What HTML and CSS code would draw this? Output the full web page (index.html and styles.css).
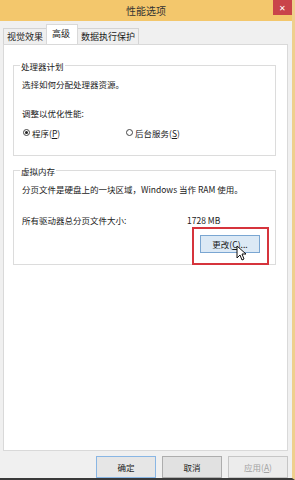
FILE: index.html
```html
<!DOCTYPE html>
<html lang="zh-CN">
<head>
    <meta charset="UTF-8">
    <title>性能选项</title>
    <link rel="stylesheet" href="styles.css">
</head>
<body>
    <div class="window">
        <div class="titlebar">
            <span class="title">性能选项</span>
            <span class="close">✕</span>
        </div>

        <div class="tabs">
            <span class="tab">视觉效果</span>
            <span class="tab active">高级</span>
            <span class="tab">数据执行保护</span>
        </div>

        <div class="panel">
            <fieldset class="group">
                <legend>处理器计划</legend>
                <p class="line first">选择如何分配处理器资源。</p>
                <p class="line gap-lg">调整以优化性能:</p>
                <div class="radios">
                    <label class="radio checked"><span class="dot"></span>程序(<u>P</u>)</label>
                    <label class="radio"><span class="dot"></span>后台服务(<u>S</u>)</label>
                </div>
            </fieldset>

            <fieldset class="group vm">
                <legend>虚拟内存</legend>
                <p class="line first">分页文件是硬盘上的一块区域，Windows 当作 RAM 使用。</p>
                <div class="size-row">
                    <span class="size-label">所有驱动器总分页文件大小:</span>
                    <span>1728 MB</span>
                </div>
                <div class="change-row">
                    <button class="btn hover">更改(<u>C</u>)...</button>
                    <span class="highlight"></span>
                    <svg class="cursor" width="11" height="16" viewBox="0 0 11 16">
                        <path d="M1 1 L1 13 L4 10 L6 15 L8 14 L6 9 L10 9 Z" fill="#fff" stroke="#111" stroke-width="1"/>
                    </svg>
                </div>
            </fieldset>
        </div>

        <div class="footer">
            <button class="btn default">确定</button>
            <button class="btn">取消</button>
            <button class="btn" disabled>应用(<u>A</u>)</button>
        </div>
    </div>
</body>
</html>
```

FILE: styles.css
```css
body {
    margin: 0;
    font-family: "Noto Sans CJK SC", "Liberation Sans", sans-serif;
    font-size: 8.5px;
    color: #1a1a1a;
}
.window {
    width: 292px;
    height: 478px;
    background-color: #f0f0f0;
    border-right: 3px solid #efcf8e;
    border-bottom: 2px solid #3a3a3a;
    display: flex;
    flex-direction: column;
}
.titlebar {
    height: 21px;
    background-color: #f3c76c;
    display: flex;
    justify-content: center;
    align-items: center;
    position: relative;
}
.title {
    font-size: 10px;
    color: #333;
}
.close {
    position: absolute;
    right: 0;
    top: 0;
    width: 19px;
    height: 15px;
    background-color: #c9444a;
    color: #fff;
    font-size: 8px;
    display: flex;
    align-items: center;
    justify-content: center;
}
.tabs {
    display: flex;
    align-items: flex-end;
    padding-left: 3px;
    margin-top: 4px;
    height: 19px;
}
.tab {
    height: 15px;
    line-height: 15px;
    padding: 0 3px;
    font-size: 9px;
    border: 1px solid #d4d4d4;
    border-bottom: none;
    background-color: #efefef;
    margin-right: -1px;
}
.tab.active {
    height: 19px;
    line-height: 17px;
    background-color: #fff;
    padding: 0 7px 0 5px;
    position: relative;
    z-index: 1;
    border-color: #d9d9d9;
}
.panel {
    margin: 0 4px 0 3px;
    background-color: #fff;
    border: 1px solid #d9d9d9;
    padding: 15px 11px 0 9px;
    box-sizing: border-box;
    height: 408px;
}
.group {
    margin: 0;
    padding: 0 8px 16px 8px;
    border: 1px solid #dcdcdc;
}
.group legend {
    margin-left: -2px;
    padding: 0 1px;
    line-height: 12px;
}
.group.vm {
    margin-top: 9px;
    padding-bottom: 11px;
}
.line {
    margin: 0;
    line-height: 12px;
}
.line.first {
    margin-top: 6px;
}
.line.gap-lg {
    margin-top: 17px;
}
.radios {
    display: flex;
    margin-top: 8px;
    line-height: 12px;
}
.radio {
    display: flex;
    align-items: center;
    width: 103px;
}
.dot {
    width: 7px;
    height: 7px;
    border: 1px solid #444;
    border-radius: 50%;
    margin: 0 2px 0 1px;
    background-color: #fff;
    box-sizing: border-box;
    display: flex;
    align-items: center;
    justify-content: center;
}
.radio.checked .dot::after {
    content: "";
    width: 3px;
    height: 3px;
    border-radius: 50%;
    background-color: #222;
}
.size-row {
    display: flex;
    margin-top: 19px;
    line-height: 12px;
}
.size-label {
    width: 165px;
}
.change-row {
    display: flex;
    justify-content: flex-end;
    margin-top: 9px;
    padding-right: 7px;
    position: relative;
}
.btn {
    width: 60px;
    height: 18px;
    padding: 0;
    font-family: inherit;
    font-size: 8.5px;
    color: #1a1a1a;
    background-color: #e1e1e1;
    border: 1px solid #adadad;
}
.btn.hover {
    background-color: #dce9f5;
    border-color: #7aa6d2;
}
.btn.default {
    border-color: #89b6e4;
    background-color: #e6e6e6;
}
.btn:disabled {
    color: #a3a3a3;
    background-color: #ececec;
    border-color: #c6c6c6;
}
.highlight {
    position: absolute;
    right: -2px;
    top: -8px;
    width: 77px;
    height: 38px;
    border: 2px solid #d6343c;
    box-sizing: border-box;
}
.cursor {
    position: absolute;
    left: 214px;
    top: 10px;
}
.footer {
    display: flex;
    justify-content: flex-end;
    gap: 6px;
    padding: 5px 4px 0 0;
}
.footer .btn {
    height: 22px;
}
```
